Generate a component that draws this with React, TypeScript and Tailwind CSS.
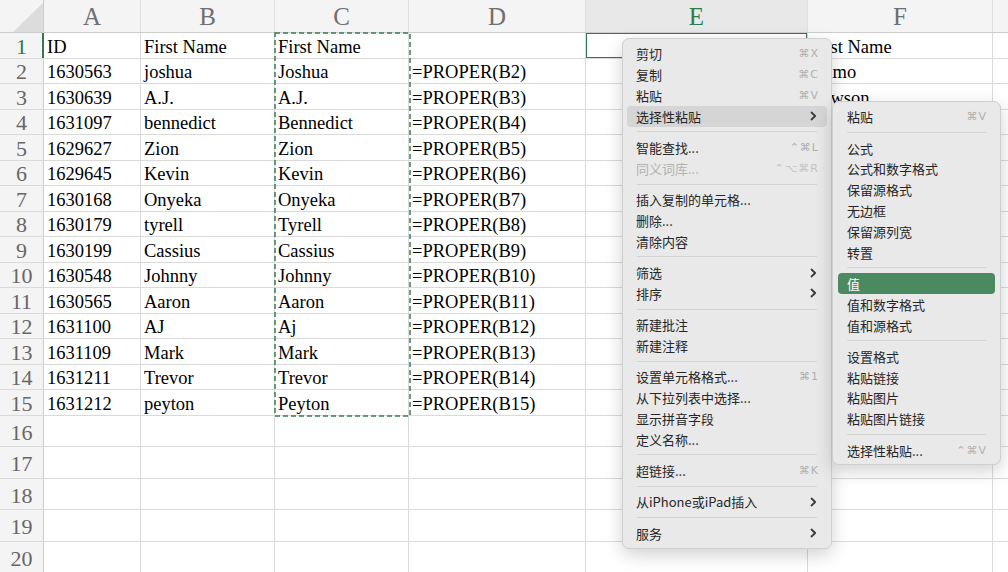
type Item =
  | "sep"
  | {
      label: string;
      shortcut?: string;
      arrow?: boolean;
      disabled?: boolean;
      hover?: boolean;
      active?: boolean;
    };

const cols = [
  { key: "A", w: "w-[97px]" },
  { key: "B", w: "w-[134px]" },
  { key: "C", w: "w-[134px]" },
  { key: "D", w: "w-[177px]" },
  { key: "E", w: "w-[222px]" },
  { key: "F", w: "w-[185px]" },
];

const rows: string[][] = [
  ["ID", "First Name", "First Name", "", "", "Last Name"],
  ["1630563", "joshua", "Joshua", "=PROPER(B2)", "", "Primo"],
  ["1630639", "A.J.", "A.J.", "=PROPER(B3)", "", "Lawson"],
  ["1631097", "bennedict", "Bennedict", "=PROPER(B4)", "", ""],
  ["1629627", "Zion", "Zion", "=PROPER(B5)", "", ""],
  ["1629645", "Kevin", "Kevin", "=PROPER(B6)", "", ""],
  ["1630168", "Onyeka", "Onyeka", "=PROPER(B7)", "", ""],
  ["1630179", "tyrell", "Tyrell", "=PROPER(B8)", "", ""],
  ["1630199", "Cassius", "Cassius", "=PROPER(B9)", "", ""],
  ["1630548", "Johnny", "Johnny", "=PROPER(B10)", "", ""],
  ["1630565", "Aaron", "Aaron", "=PROPER(B11)", "", ""],
  ["1631100", "AJ", "Aj", "=PROPER(B12)", "", ""],
  ["1631109", "Mark", "Mark", "=PROPER(B13)", "", ""],
  ["1631211", "Trevor", "Trevor", "=PROPER(B14)", "", ""],
  ["1631212", "peyton", "Peyton", "=PROPER(B15)", "", ""],
];

const mainMenu: Item[] = [
  { label: "剪切", shortcut: "⌘X" },
  { label: "复制", shortcut: "⌘C" },
  { label: "粘贴", shortcut: "⌘V" },
  { label: "选择性粘贴", arrow: true, hover: true },
  "sep",
  { label: "智能查找...", shortcut: "⌃⌘L" },
  { label: "同义词库...", shortcut: "⌃⌥⌘R", disabled: true },
  "sep",
  { label: "插入复制的单元格..." },
  { label: "删除..." },
  { label: "清除内容" },
  "sep",
  { label: "筛选", arrow: true },
  { label: "排序", arrow: true },
  "sep",
  { label: "新建批注" },
  { label: "新建注释" },
  "sep",
  { label: "设置单元格格式...", shortcut: "⌘1" },
  { label: "从下拉列表中选择..." },
  { label: "显示拼音字段" },
  { label: "定义名称..." },
  "sep",
  { label: "超链接...", shortcut: "⌘K" },
  "sep",
  { label: "从iPhone或iPad插入", arrow: true },
  "sep",
  { label: "服务", arrow: true },
];

const subMenu: Item[] = [
  { label: "粘贴", shortcut: "⌘V" },
  "sep",
  { label: "公式" },
  { label: "公式和数字格式" },
  { label: "保留源格式" },
  { label: "无边框" },
  { label: "保留源列宽" },
  { label: "转置" },
  "sep",
  { label: "值", active: true },
  { label: "值和数字格式" },
  { label: "值和源格式" },
  "sep",
  { label: "设置格式" },
  { label: "粘贴链接" },
  { label: "粘贴图片" },
  { label: "粘贴图片链接" },
  "sep",
  { label: "选择性粘贴...", shortcut: "⌃⌘V" },
];

const Chevron = () => (
  <svg width="7" height="10" viewBox="0 0 7 10" className="shrink-0 mr-[2px]">
    <path
      d="M1.5 1.5 L5.2 5 L1.5 8.5"
      fill="none"
      stroke="#3a3a3a"
      strokeWidth="1.8"
      strokeLinecap="round"
      strokeLinejoin="round"
    />
  </svg>
);

const Menu = ({ items, mx }: { items: Item[]; mx: string }) => (
  <div className="flex flex-col">
    {items.map((it, i) =>
      it === "sep" ? (
        <div key={i} className="h-[10.5px] flex items-center px-[14px]">
          <div className="h-px w-full bg-[#d3d3d3]" />
        </div>
      ) : (
        <div
          key={i}
          className={`${mx} h-[20.8px] flex items-center justify-between pl-[9px] pr-[8px] rounded-[4px] ${
            it.active ? "bg-[#4b8a60] text-white" : it.hover ? "bg-[#d5d5d5]" : ""
          } ${it.disabled ? "text-[#b2b2b2]" : it.active ? "" : "text-[#262626]"}`}
        >
          <span className="text-[13px] leading-none">{it.label}</span>
          {it.shortcut && (
            <span
              className={`text-[11px] leading-none tracking-[1px] font-['DejaVu_Sans',sans-serif] ${
                it.disabled ? "text-[#c4c4c4]" : "text-[#b0b0b0]"
              }`}
            >
              {it.shortcut}
            </span>
          )}
          {it.arrow && <Chevron />}
        </div>
      )
    )}
  </div>
);

export default function App() {
  return (
    <div className="relative w-[1008px] h-[572px] overflow-hidden bg-white font-['Liberation_Serif',serif]">
      {/* column headers */}
      <div className="flex h-[33px] bg-[#f4f4f4] border-b border-[#cdcdcd]">
        <div className="w-[44px] shrink-0 border-r border-[#cdcdcd] flex items-end justify-end">
          <svg width="32" height="29" viewBox="0 0 32 29">
            <polygon points="32,0 32,29 2,29" fill="#dcdcdc" />
          </svg>
        </div>
        {cols.map((c) => (
          <div
            key={c.key}
            className={`${c.w} shrink-0 border-r border-[#e0e0e0] flex items-center justify-center pt-[2px] text-[25px] ${
              c.key === "E" ? "bg-[#e8e8e8] text-[#2f7a4f]" : "text-[#6f6f6f]"
            }`}
          >
            {c.key}
          </div>
        ))}
        <div className="flex-1" />
      </div>

      {/* data rows */}
      {rows.map((r, ri) => (
        <div key={ri} className="flex h-[25.5px] border-b border-[#dadada]">
          <div
            className={`relative w-[44px] shrink-0 bg-[#f4f4f4] border-r border-[#cdcdcd] flex items-center justify-center pt-[3px] text-[22px] leading-none ${
              ri === 0 ? "text-[#2f7a4f]" : "text-[#666]"
            }`}
          >
            {ri + 1}
            {ri === 0 && <div className="absolute right-[-1px] top-0 bottom-0 w-[2px] bg-[#2f7a4f]" />}
          </div>
          {cols.map((c, ci) => (
            <div
              key={c.key}
              className={`relative ${c.w} shrink-0 border-r border-[#dadada] flex items-center pl-[3px] pt-[3px] text-[18.5px] leading-none text-black whitespace-nowrap overflow-hidden`}
            >
              {r[ci]}
              {ri === 0 && c.key === "E" && (
                <div className="absolute left-[-1px] top-[-1px] right-[-1px] bottom-[-1px] border-2 border-[#2f7a4f]" />
              )}
            </div>
          ))}
          <div className="flex-1" />
        </div>
      ))}
      {[16, 17, 18, 19, 20].map((n) => (
        <div key={n} className="flex h-[31.5px] border-b border-[#dadada]">
          <div className="w-[44px] shrink-0 bg-[#f4f4f4] border-r border-[#cdcdcd] flex items-center justify-center pt-[4px] text-[22px] leading-none text-[#666]">
            {n}
          </div>
          {cols.map((c) => (
            <div key={c.key} className={`${c.w} shrink-0 border-r border-[#dadada]`} />
          ))}
          <div className="flex-1" />
        </div>
      ))}

      {/* copy marquee around C1:C15 */}
      <svg className="absolute left-[274px] top-[32px]" width="137" height="385">
        <rect
          x="1"
          y="1"
          width="135"
          height="383"
          fill="none"
          stroke="#3c7c55"
          strokeWidth="1.5"
          strokeDasharray="5 3"
        />
      </svg>

      {/* context menu */}
      <div className="absolute left-[622px] top-[38px] w-[210px] pt-[4.5px] pb-[5px] bg-[#e9e9e9] rounded-[7px] border border-[#cfcfcf] shadow-[0_6px_18px_rgba(0,0,0,0.18)] font-['Noto_Sans_CJK_SC','Noto_Sans',sans-serif]">
        <Menu items={mainMenu} mx="mx-[4px]" />
      </div>

      {/* paste special submenu */}
      <div className="absolute left-[832px] top-[101px] w-[169px] pt-[4.5px] pb-[4px] bg-[#e9e9e9] rounded-[7px] border border-[#cfcfcf] shadow-[0_6px_18px_rgba(0,0,0,0.18)] font-['Noto_Sans_CJK_SC','Noto_Sans',sans-serif]">
        <Menu items={subMenu} mx="mx-[5px]" />
      </div>
    </div>
  );
}
